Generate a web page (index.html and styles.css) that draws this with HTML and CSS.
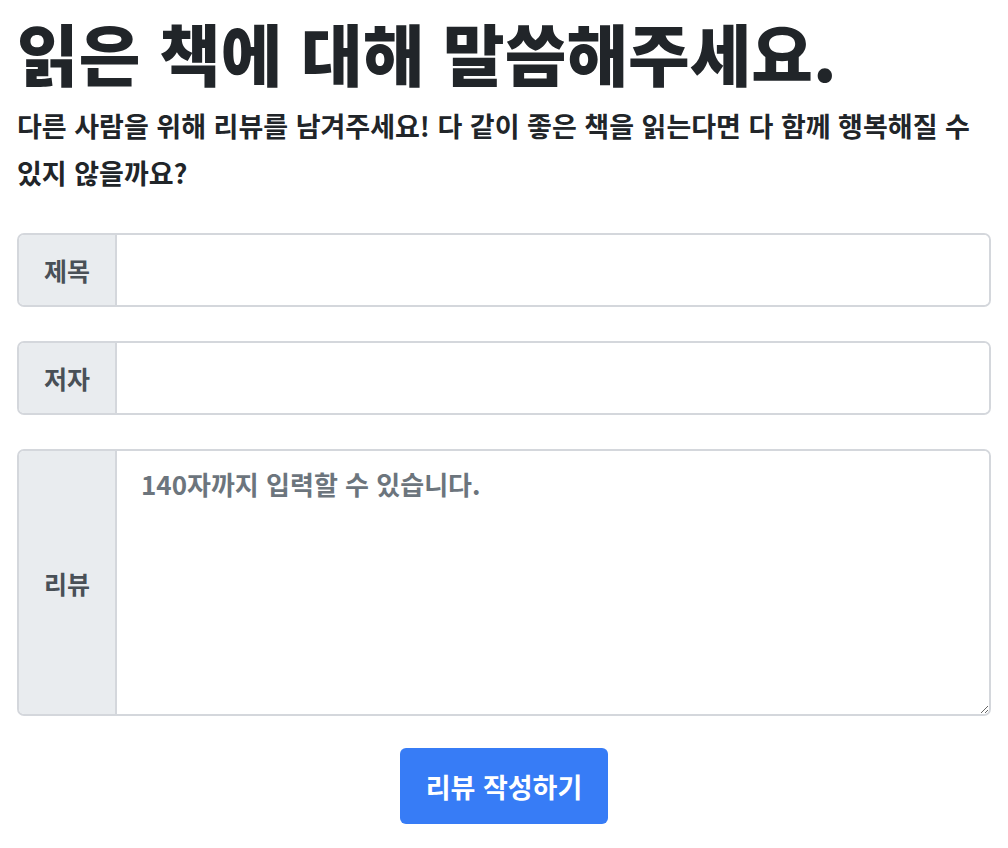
FILE: index.html
```html
<!DOCTYPE html>
<html lang="ko">
  <head>
    <meta charset="utf-8">
    <title>리뷰 작성</title>
    <link rel="stylesheet" href="styles.css">
  </head>
  <body>
    <div class="container">
      <h1 class="title">읽은 책에 대해 말씀해주세요.</h1>
      <p class="lead">다른 사람을 위해 리뷰를 남겨주세요! 다 같이 좋은 책을 읽는다면 다 함께 행복해질 수 있지 않을까요?</p>

      <form class="review-form">
        <div class="input-group">
          <label class="input-label" for="title">제목</label>
          <input class="input-field" type="text" id="title" name="title">
        </div>
        <div class="input-group">
          <label class="input-label" for="author">저자</label>
          <input class="input-field" type="text" id="author" name="author">
        </div>
        <div class="input-group tall">
          <label class="input-label" for="review">리뷰</label>
          <textarea class="input-field" id="review" name="review" maxlength="140" placeholder="140자까지 입력할 수 있습니다."></textarea>
        </div>
        <div class="actions">
          <button type="submit" class="submit-btn">리뷰 작성하기</button>
        </div>
      </form>
    </div>
  </body>
</html>
```

FILE: styles.css
```css
body {
  margin: 0;
  font-family: "Noto Sans CJK KR", "Noto Sans", sans-serif;
  color: #212529;
  background: #fff;
}

.container {
  padding: 14px 17px;
}

.title {
  margin: 0;
  font-size: 67px;
  font-weight: 900;
  line-height: 76px;
}

.lead {
  margin: 12px 0 0;
  font-size: 27px;
  font-weight: 700;
  line-height: 47px;
}

.review-form {
  margin-top: 37px;
  display: flex;
  flex-direction: column;
  gap: 34px;
}

.input-group {
  display: flex;
  height: 74px;
  border: 2px solid #d4d7dc;
  border-radius: 7px;
  overflow: hidden;
  box-sizing: border-box;
}

.input-group.tall {
  height: 267px;
}

.input-label {
  width: 96px;
  flex-shrink: 0;
  display: flex;
  align-items: center;
  justify-content: center;
  background: #e9ecef;
  border-right: 2px solid #d4d7dc;
  color: #495057;
  font-size: 25px;
  font-weight: 700;
}

.input-field {
  flex: 1;
  border: none;
  outline: none;
  padding: 0 24px;
  font-family: inherit;
  font-size: 26px;
  font-weight: 700;
  color: #212529;
  background: #fff;
}

textarea.input-field {
  padding: 17px 24px;
  line-height: 32px;
  resize: vertical;
}

.input-field::placeholder {
  color: #6c757d;
}

.actions {
  display: flex;
  justify-content: center;
  margin-top: -2px;
}

.submit-btn {
  width: 208px;
  height: 76px;
  border: none;
  border-radius: 6px;
  background: #377cf6;
  color: #fff;
  font-family: inherit;
  font-size: 27px;
  font-weight: 700;
  cursor: pointer;
}
```
